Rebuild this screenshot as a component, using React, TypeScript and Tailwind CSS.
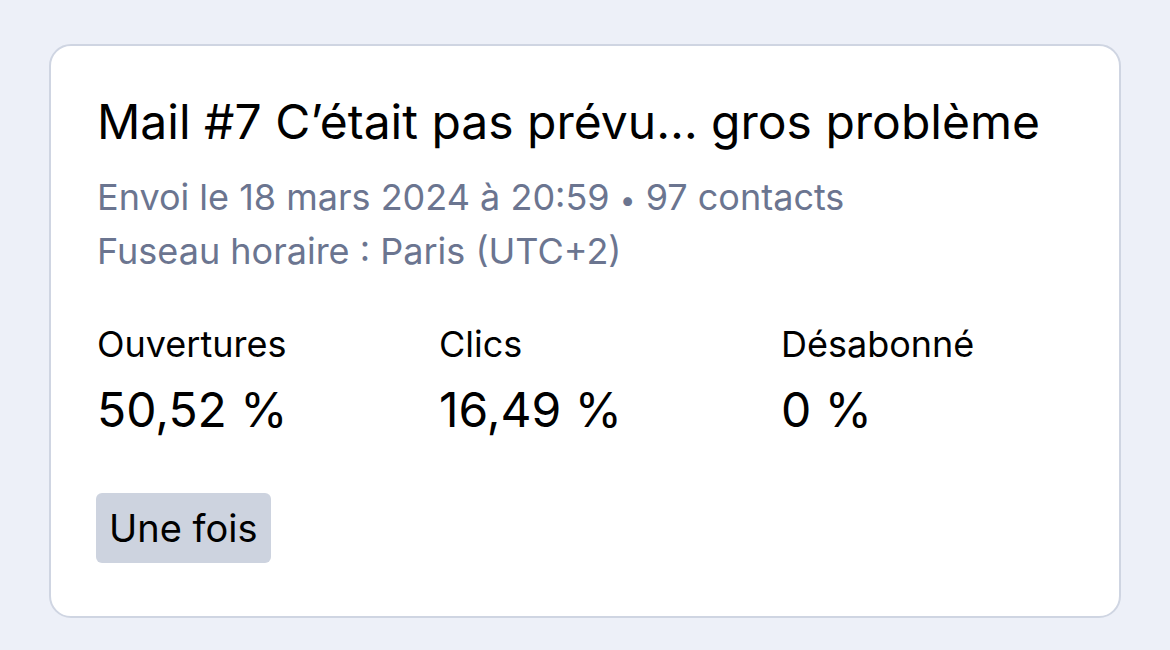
import React from "react";

const stats = [
  { label: "Ouvertures", value: "50,52 %" },
  { label: "Clics", value: "16,49 %" },
  { label: "Désabonné", value: "0 %" },
];

const App: React.FC = () => {
  return (
    <div
      className="min-h-[650px] w-full bg-[#edf0f8] px-[49px] pt-[44px]"
      style={{ fontFamily: "Inter, 'Noto Sans', sans-serif" }}
    >
      <div className="rounded-[22px] border-2 border-[#cfd5e2] bg-white pl-[46px] pr-[46px] pt-[47px] pb-[53px]">
        <h1 className="text-[48px] leading-[58px] text-black">
          Mail #7 C’était pas prévu… gros problème
        </h1>
        <div className="mt-[19px] text-[36px] leading-[54px] text-[#6b7590]">
          <p>
            Envoi le 18 mars 2024 à 20:59 <span className="text-[28px] leading-[0]">•</span> 97 contacts
          </p>
          <p>Fuseau horaire : Paris (UTC+2)</p>
        </div>
        <div className="mt-[44px] grid grid-cols-[342px_342px_1fr]">
          {stats.map((s) => (
            <div key={s.label}>
              <div className="text-[36px] leading-[44px] text-black">{s.label}</div>
              <div className="mt-[15px] text-[48px] leading-[58px] text-black">{s.value}</div>
            </div>
          ))}
        </div>
        <div className="mt-[54px] -ml-px">
          <span className="inline-block rounded-[6px] bg-[#cdd3df] px-[13px] py-[10px] text-[38px] leading-[50px] text-black">
            Une fois
          </span>
        </div>
      </div>
    </div>
  );
};

export default App;
